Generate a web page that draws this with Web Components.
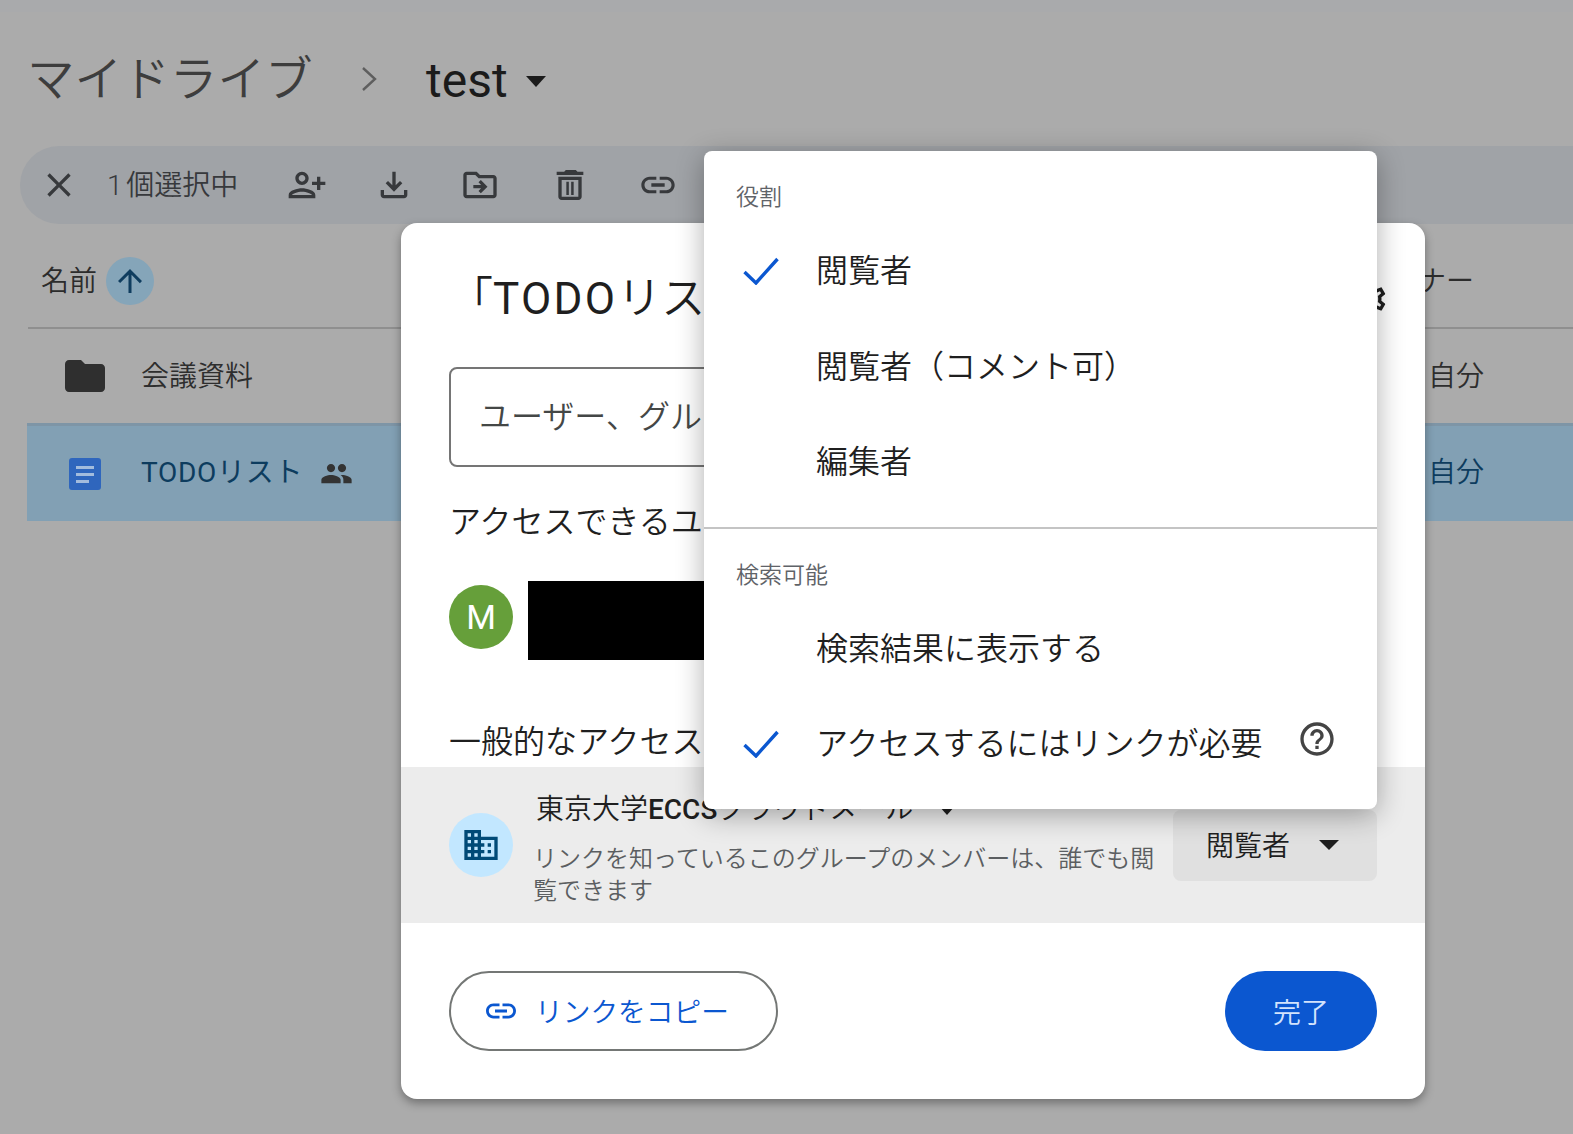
<!DOCTYPE html>
<html lang="ja">
<head>
<meta charset="utf-8">
<title>test - Google ドライブ</title>
<style>
    html, body { margin: 0; height: 100%; overflow: hidden; background: #ababab; }
    body { font-family: Roboto, "Noto Sans CJK JP", sans-serif; font-weight: 350; }
</style>
</head>
<body>
<drive-app></drive-app>

<script>
const ICONS = {
    close: 'M19 6.41L17.59 5 12 10.59 6.41 5 5 6.41 10.59 12 5 17.59 6.41 19 12 13.41 17.59 19 19 17.59 13.41 12z',
    personAdd: 'M9 12c-2.21 0-4-1.79-4-4s1.79-4 4-4 4 1.79 4 4-1.79 4-4 4zm0-6c-1.1 0-2 .9-2 2s.9 2 2 2 2-.9 2-2-.9-2-2-2zm0 8c2.67 0 8 1.34 8 4v2H1v-2c0-2.66 5.33-4 8-4zm6 4c-.22-.72-3.31-2-6-2-2.7 0-5.8 1.29-6 2h12zm3-3v-3h-3v-2h3V7h2v3h3v2h-3v3h-2z',
    download: 'M18 15v3H6v-3H4v3c0 1.1.9 2 2 2h12c1.1 0 2-.9 2-2v-3h-2zm-1-4l-1.41-1.41L13 12.17V4h-2v8.17L8.41 9.59 7 11l5 5 5-5z',
    folderMove: 'M20 6h-8l-2-2H4c-1.1 0-2 .9-2 2v12c0 1.1.9 2 2 2h16c1.1 0 2-.9 2-2V8c0-1.1-.9-2-2-2zm0 12H4V6h5.17l2 2H20v10zM12.5 9l-1.41 1.41L12.67 12H8v2h4.67l-1.58 1.59L12.5 17l4-4z',
    trash: 'M17 9v10H7V9h10m-2.5-6h-5l-1 1H4v2h16V4h-3.5l-1-1zM19 7H5v12c0 1.1.9 2 2 2h10c1.1 0 2-.9 2-2V7zM9.8 10h1.5v8H9.8zM12.7 10h1.5v8h-1.5z',
    link: 'M3.9 12c0-1.71 1.39-3.1 3.1-3.1h4V7H7c-2.76 0-5 2.24-5 5s2.24 5 5 5h4v-1.9H7c-1.71 0-3.1-1.39-3.1-3.1zM8 13h8v-2H8v2zm9-6h-4v1.9h4c1.71 0 3.1 1.39 3.1 3.1s-1.39 3.1-3.1 3.1h-4V17h4c2.76 0 5-2.24 5-5s-2.24-5-5-5z',
    arrowUp: 'M4 12l1.41 1.41L11 7.83V20h2V7.83l5.58 5.59L20 12l-8-8-8 8z',
    folder: 'M10 4H4c-1.1 0-1.99.9-1.99 2L2 18c0 1.1.9 2 2 2h16c1.1 0 2-.9 2-2V8c0-1.1-.9-2-2-2h-8l-2-2z',
    people: 'M16 11c1.66 0 2.99-1.34 2.99-3S17.66 5 16 5c-1.66 0-3 1.34-3 3s1.34 3 3 3zm-8 0c1.66 0 2.99-1.34 2.99-3S9.66 5 8 5C6.34 5 5 6.34 5 8s1.34 3 3 3zm0 2c-2.33 0-7 1.17-7 3.5V19h14v-2.5c0-2.33-4.67-3.5-7-3.5zm8 0c-.29 0-.62.02-.97.05 1.16.84 1.97 1.97 1.97 3.45V19h6v-2.5c0-2.33-4.67-3.5-7-3.5z',
    settings: 'M19.43 12.98c.04-.32.07-.64.07-.98 0-.34-.03-.66-.07-.98l2.11-1.65c.19-.15.24-.42.12-.64l-2-3.46c-.09-.16-.26-.25-.44-.25-.06 0-.12.01-.17.03l-2.49 1c-.52-.4-1.08-.73-1.69-.98l-.38-2.65C14.46 2.18 14.25 2 14 2h-4c-.25 0-.46.18-.49.42l-.38 2.65c-.61.25-1.17.59-1.69.98l-2.49-1c-.06-.02-.12-.03-.18-.03-.17 0-.34.09-.43.25l-2 3.46c-.13.22-.07.49.12.64l2.11 1.65c-.04.32-.07.65-.07.98 0 .33.03.66.07.98l-2.11 1.65c-.19.15-.24.42-.12.64l2 3.46c.09.16.26.25.44.25.06 0 .12-.01.17-.03l2.49-1c.52.4 1.08.73 1.69.98l.38 2.65c.03.24.24.42.49.42h4c.25 0 .46-.18.49-.42l.38-2.65c.61-.25 1.17-.59 1.69-.98l2.49 1c.06.02.12.03.18.03.17 0 .34-.09.43-.25l2-3.46c.12-.22.07-.49-.12-.64l-2.11-1.65zm-1.98-1.71c.04.31.05.52.05.73 0 .21-.02.43-.05.73l-.14 1.13.89.7 1.08.84-.7 1.21-1.27-.51-1.04-.42-.9.68c-.43.32-.84.56-1.25.73l-1.06.43-.16 1.13-.2 1.35h-1.4l-.19-1.35-.16-1.13-1.06-.43c-.43-.18-.83-.41-1.23-.71l-.91-.7-1.06.43-1.27.51-.7-1.21 1.08-.84.89-.7-.14-1.13c-.03-.31-.05-.54-.05-.74s.02-.43.05-.73l.14-1.13-.89-.7-1.08-.84.7-1.21 1.27.51 1.04.42.9-.68c.43-.32.84-.56 1.25-.73l1.06-.43.16-1.13.2-1.35h1.39l.19 1.35.16 1.13 1.06.43c.43.18.83.41 1.23.71l.91.7 1.06-.43 1.27-.51.7 1.21-1.07.85-.89.7.14 1.13zM12 8c-2.21 0-4 1.79-4 4s1.79 4 4 4 4-1.79 4-4-1.79-4-4-4zm0 6c-1.1 0-2-.9-2-2s.9-2 2-2 2 .9 2 2-.9 2-2 2z',
    domain: 'M12 7V3H2v18h20V7H12zM6 19H4v-2h2v2zm0-4H4v-2h2v2zm0-4H4V9h2v2zm0-4H4V5h2v2zm4 12H8v-2h2v2zm0-4H8v-2h2v2zm0-4H8V9h2v2zm0-4H8V5h2v2zm10 12h-8v-2h2v-2h-2v-2h2v-2h-2V9h8v10zm-2-8h-2v2h2v-2zm0 4h-2v2h2v-2z',
    help: 'M11 18h2v-2h-2v2zm1-16C6.48 2 2 6.48 2 12s4.48 10 10 10 10-4.48 10-10S17.52 2 12 2zm0 18c-4.41 0-8-3.59-8-8s3.59-8 8-8 8 3.59 8 8-3.59 8-8 8zm0-14c-2.21 0-4 1.79-4 4h2c0-1.1.9-2 2-2s2 .9 2 2c0 2-3 1.75-3 5h2c0-2.25 3-2.5 3-5 0-2.21-1.79-4-4-4z',
};

class MdIcon extends HTMLElement {
    connectedCallback() {
        const size = this.getAttribute('size') || 40;
        const d = ICONS[this.getAttribute('name')];
        this.attachShadow({ mode: 'open' }).innerHTML = /* html */ `
            <style>
                :host { display: block; flex: none; width: ${size}px; height: ${size}px; }
                svg { display: block; width: 100%; height: 100%; fill: currentColor; }
            </style>
            <svg viewBox="0 0 24 24"><path d="${d}"/></svg>
        `;
    }
}

class CaretDown extends HTMLElement {
    connectedCallback() {
        this.attachShadow({ mode: 'open' }).innerHTML = /* html */ `
            <style>
                :host {
                    display: block; flex: none; width: 0; height: 0;
                    border-left: var(--w, 10px) solid transparent;
                    border-right: var(--w, 10px) solid transparent;
                    border-top: var(--h, 11px) solid currentColor;
                }
            </style>
        `;
    }
}

class DriveBreadcrumb extends HTMLElement {
    connectedCallback() {
        this.attachShadow({ mode: 'open' }).innerHTML = /* html */ `
            <style>
                :host { display: flex; align-items: center; height: 134px; padding-left: 27px; box-sizing: border-box; }
                .root { font-size: 47.6px; line-height: 60px; color: #3d3d3d; width: 288px; white-space: nowrap; margin-top: 2px; }
                svg { width: 16px; height: 26px; margin-left: 46px; fill: none; stroke: #5e5e5e; stroke-width: 2.4; }
                .cur { font-size: 48px; line-height: 60px; color: #1b1b1b; margin-left: 49px; font-weight: 400; width: 79px; margin-top: 4px; white-space: nowrap; }
                md-caret { margin-left: 21px; color: #1b1b1b; --w: 10px; --h: 11px; margin-top: 5px; }
            </style>
            <span class="root">マイドライブ</span>
            <svg viewBox="0 0 16 26"><polyline points="2,2 14,13 2,24"/></svg>
            <span class="cur">test</span>
            <md-caret></md-caret>
        `;
    }
}

class SelectionToolbar extends HTMLElement {
    connectedCallback() {
        this.attachShadow({ mode: 'open' }).innerHTML = /* html */ `
            <style>
                :host {
                    display: flex; align-items: center; height: 78px; margin: 0 -50px 0 20px;
                    background: #a0a3a7; border-radius: 39px; color: #37393c;
                }
                .count { font-size: 28px; margin: 0 0 4px 28px; width: 130px; white-space: nowrap; word-spacing: -3px; }
                md-icon[name=close] { margin-left: 19px; }
                md-icon[name=personAdd] { margin-left: 50px; }
                md-icon[name=download] { margin-left: 47px; }
                md-icon[name=folderMove] { margin-left: 46px; }
                md-icon[name=trash] { margin-left: 50px; }
                md-icon[name=link] { margin-left: 48px; }
            </style>
            <md-icon name="close"></md-icon>
            <span class="count">1 個選択中</span>
            <md-icon name="personAdd"></md-icon>
            <md-icon name="download"></md-icon>
            <md-icon name="folderMove"></md-icon>
            <md-icon name="trash"></md-icon>
            <md-icon name="link"></md-icon>
        `;
    }
}

class FileTable extends HTMLElement {
    connectedCallback() {
        this.attachShadow({ mode: 'open' }).innerHTML = /* html */ `
            <style>
                :host { display: block; margin-left: 28px; }
                .head {
                    display: flex; align-items: center; height: 105px; box-sizing: border-box;
                    border-bottom: 2px solid #8f8f8f; padding: 11px 0 0 13px; font-size: 28px; color: #2c2c2c;
                }
                .head > span:not(.sort) { margin-bottom: 4px; }
                .sort {
                    display: flex; align-items: center; justify-content: center;
                    width: 48px; height: 48px; border-radius: 50%; background: #85a5b9; color: #0f3d5f; margin-left: 9px;
                }
                .owner { margin-left: auto; padding-right: 99px; white-space: nowrap; }
            </style>
            <div class="head">
                <span>名前</span>
                <span class="sort"><md-icon name="arrowUp" size="36"></md-icon></span>
                <span class="owner">オーナー</span>
            </div>
            <slot></slot>
        `;
    }
}

class FileRow extends HTMLElement {
    connectedCallback() {
        this.attachShadow({ mode: 'open' }).innerHTML = /* html */ `
            <style>
                :host {
                    display: flex; align-items: center; height: 94px; box-sizing: border-box;
                    font-size: 28px; color: #2e2e2e; --lift: 4px;
                }
                :host([selected]) {
                    height: 98px; margin-left: -1px; padding-left: 1px; --lift: 7px;
                    background: #82a0b4; border-top: 3px solid #7e95a6; color: #0d3c5e;
                }
                .icon { width: 48px; height: 48px; margin-left: 33px; display: flex; align-items: center; justify-content: center; color: #2f2f2f; }
                .name { margin: 0 0 var(--lift) 32px; white-space: nowrap; }
                :host([selected]) .name { letter-spacing: .7px; font-weight: 400; }
                ::slotted(md-icon:not([slot])) { margin-left: 17px; color: #333; }
                .owner { margin: 0 0 var(--lift) auto; width: 145px; }
            </style>
            <span class="icon"><slot name="icon"></slot></span>
            <span class="name"><slot name="name"></slot></span>
            <slot></slot>
            <span class="owner"><slot name="owner"></slot></span>
        `;
    }
}

class DocIcon extends HTMLElement {
    connectedCallback() {
        this.attachShadow({ mode: 'open' }).innerHTML = /* html */ `
            <style>:host { display: block; width: 32px; height: 32px; } svg { display: block; }</style>
            <svg width="32" height="32" viewBox="0 0 32 32">
                <rect width="32" height="32" rx="3" fill="#2f66bd"/>
                <rect x="7" y="8" width="18" height="3" fill="#a3bcdd"/>
                <rect x="7" y="15" width="18" height="3" fill="#a3bcdd"/>
                <rect x="7" y="22" width="13" height="3" fill="#a3bcdd"/>
            </svg>
        `;
    }
}

class MenuItem extends HTMLElement {
    connectedCallback() {
        const checked = this.hasAttribute('checked');
        this.attachShadow({ mode: 'open' }).innerHTML = /* html */ `
            <style>
                :host {
                    display: flex; align-items: center; height: 95.5px; padding-left: 39px;
                    font-size: 32px; color: #1f1f1f; white-space: nowrap;
                }
                .check { width: 36px; height: 28px; margin-right: 37px; flex: none; margin-top: 3px; }
                polyline { fill: none; stroke: #0b57d0; stroke-width: 3.4; }
                .text { margin-bottom: 3px; }
                ::slotted(md-icon) { margin-left: 35px; margin-top: -8px; color: #444; }
            </style>
            <svg class="check" viewBox="0 0 36 28">
                ${checked ? '<polyline points="1.5,15 13,26 34.5,2"/>' : ''}
            </svg>
            <span class="text"><slot></slot></span>
            <slot name="after"></slot>
        `;
    }
}

class AccessMenu extends HTMLElement {
    connectedCallback() {
        this.attachShadow({ mode: 'open' }).innerHTML = /* html */ `
            <style>
                :host {
                    position: absolute; left: 303px; top: -72px; width: 673px; box-sizing: border-box;
                    padding: 32px 0 18px; background: #fff; border-radius: 8px;
                    box-shadow: 0 6px 28px rgba(0, 0, 0, .32);
                }
                .label { font-size: 23px; line-height: 30px; color: #5f6368; padding-left: 32px; margin-bottom: 9px; white-space: nowrap; }
                hr { border: 0; height: 2px; background: #c4c4c4; margin: 18px 0 32px; }
            </style>
            <div class="label">役割</div>
            <menu-item checked>閲覧者</menu-item>
            <menu-item>閲覧者（コメント可）</menu-item>
            <menu-item>編集者</menu-item>
            <hr>
            <div class="label">検索可能</div>
            <menu-item>検索結果に表示する</menu-item>
            <menu-item checked>アクセスするにはリンクが必要<md-icon slot="after" name="help"></md-icon></menu-item>
        `;
    }
}

class ShareDialog extends HTMLElement {
    connectedCallback() {
        this.attachShadow({ mode: 'open' }).innerHTML = /* html */ `
            <style>
                :host {
                    position: absolute; left: 401px; top: 223px; width: 1024px; height: 876px;
                    background: #fff; border-radius: 16px; box-shadow: 0 4px 10px rgba(0, 0, 0, .35);
                    color: #1f1f1f;
                }
                .title { display: flex; align-items: center; height: 52px; margin: 48px 36px 0 48px; font-size: 44px; white-space: nowrap; }
                .title .name { margin-top: -4px; }
                .title b { font-weight: 400; letter-spacing: 2.3px; }
                .title md-icon { margin-left: auto; margin-top: 4px; color: #1f1f1f; }
                .input {
                    display: flex; align-items: center; height: 100px; box-sizing: border-box; margin: 44px 48px 0;
                    border: 2px solid #757575; border-radius: 8px; padding: 0 0 6px 28px;
                    font-size: 32px; color: #444746; white-space: nowrap; overflow: hidden;
                }
                .sec { font-size: 32px; line-height: 40px; margin: 35px 48px 0; white-space: nowrap; }
                .person { display: flex; align-items: center; height: 79px; margin: 39px 48px 0; }
                .avatar {
                    width: 64px; height: 64px; border-radius: 50%; background: #669f3a; color: #fff; margin-bottom: 8px;
                    display: flex; align-items: center; justify-content: center; font-size: 34px; font-weight: 400;
                }
                .redact { width: 480px; height: 79px; background: #000; margin-left: 15px; }
                .band {
                    display: flex; height: 156px; margin-top: 5px; padding: 0 48px; background: #ececec;
                }
                .org {
                    align-self: center; display: flex; align-items: center; justify-content: center; flex: none;
                    width: 64px; height: 64px; border-radius: 50%; background: #c2e7ff; color: #004a77;
                }
                .txt { margin-left: 20px; padding-top: 23px; width: 635px; flex: none; }
                .group { display: flex; align-items: center; font-size: 28px; line-height: 40px; margin-left: 3px; white-space: nowrap; }
                .group b { font-weight: 500; }
                .group md-caret { margin-left: 26px; --w: 8px; --h: 9px; }
                .desc { font-size: 24px; line-height: 32px; margin-top: 13px; color: #5b5e61; }
                .role {
                    display: flex; align-items: center; align-self: center; box-sizing: border-box;
                    width: 204px; height: 71px; margin-left: auto; padding-left: 33px;
                    background: #e0e0e0; border-radius: 8px; font-size: 28px; white-space: nowrap;
                }
                .role span { margin-bottom: 2px; }
                .role md-caret { margin-left: 29px; --w: 10px; --h: 10px; }
                .foot { display: flex; justify-content: space-between; padding: 48px 48px 0; }
                button { font: inherit; font-size: 28px; height: 80px; box-sizing: border-box; border-radius: 40px; cursor: pointer; display: flex; align-items: center; white-space: nowrap; }
                .copy { width: 329px; background: #fff; border: 2px solid #747775; color: #0b57d0; padding: 0 0 0 32px; }
                .copy span { margin: 0 0 2px 16px; font-size: 27.7px; }
                .done { width: 152px; background: #0b57d0; border: 0; color: #d3e3fd; justify-content: center; }
            </style>
            <div class="title"><span class="name">「<b>TODO</b>リスト」を共有</span><md-icon name="settings"></md-icon></div>
            <div class="input">ユーザー、グループ、カレンダーの予定を追加</div>
            <div class="sec">アクセスできるユーザー</div>
            <div class="person">
                <span class="avatar">M</span>
                <span class="redact"></span>
            </div>
            <div class="sec" style="margin-top:62px">一般的なアクセス</div>
            <div class="band">
                <span class="org"><md-icon name="domain"></md-icon></span>
                <div class="txt">
                    <div class="group"><span>東京大学<b>ECCS</b>クラウドメール</span><md-caret></md-caret></div>
                    <div class="desc">リンクを知っているこのグループのメンバーは、誰でも閲覧できます</div>
                </div>
                <div class="role"><span>閲覧者</span><md-caret></md-caret></div>
            </div>
            <div class="foot">
                <button class="copy"><md-icon name="link" size="36"></md-icon><span>リンクをコピー</span></button>
                <button class="done">完了</button>
            </div>
            <access-menu></access-menu>
        `;
    }
}

class DriveApp extends HTMLElement {
    connectedCallback() {
        this.attachShadow({ mode: 'open' }).innerHTML = /* html */ `
            <style>
                :host { display: block; position: relative; height: 1134px; overflow: hidden; background: #ababab; }
                .strip { height: 12px; background: #a9aaac; }
            </style>
            <div class="strip"></div>
            <drive-breadcrumb></drive-breadcrumb>
            <selection-toolbar></selection-toolbar>
            <file-table>
                <file-row>
                    <md-icon slot="icon" name="folder" size="48"></md-icon>
                    <span slot="name">会議資料</span>
                    <span slot="owner">自分</span>
                </file-row>
                <file-row selected>
                    <doc-icon slot="icon"></doc-icon>
                    <span slot="name">TODOリスト</span>
                    <md-icon name="people" size="33"></md-icon>
                    <span slot="owner">自分</span>
                </file-row>
            </file-table>
            <share-dialog></share-dialog>
        `;
    }
}

customElements.define('md-icon', MdIcon);
customElements.define('md-caret', CaretDown);
customElements.define('drive-breadcrumb', DriveBreadcrumb);
customElements.define('selection-toolbar', SelectionToolbar);
customElements.define('file-table', FileTable);
customElements.define('file-row', FileRow);
customElements.define('doc-icon', DocIcon);
customElements.define('menu-item', MenuItem);
customElements.define('access-menu', AccessMenu);
customElements.define('share-dialog', ShareDialog);
customElements.define('drive-app', DriveApp);
</script>
</body>
</html>
